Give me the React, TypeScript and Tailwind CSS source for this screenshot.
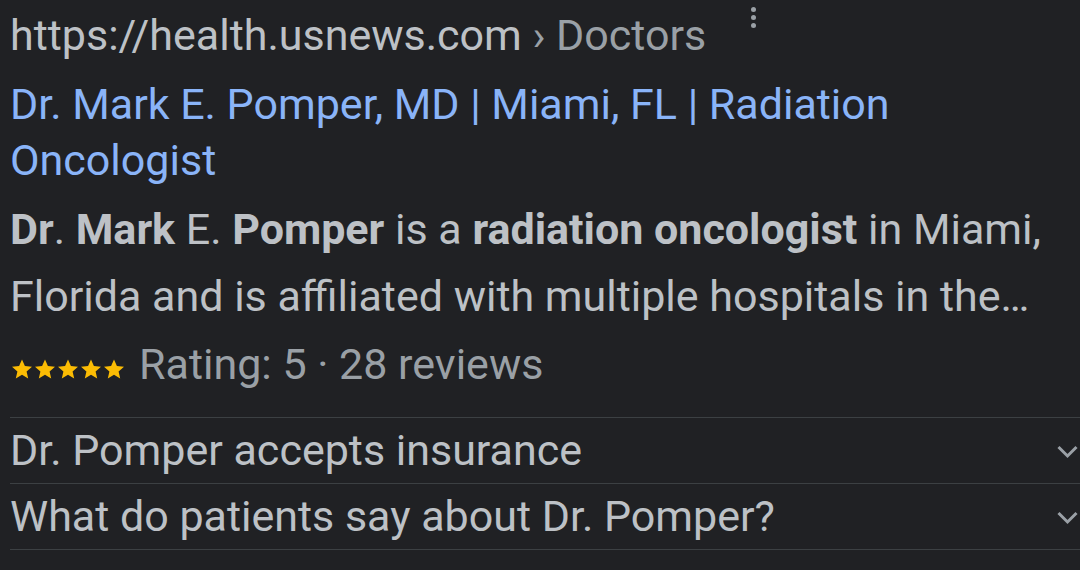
const Star = () => (
  <svg viewBox="0 0 24 24" className="w-[24px] h-[24px] -mr-[1px]" fill="#fbbc04">
    <path d="M12 2.5l2.9 6.6 7.1.6-5.4 4.7 1.6 7-6.2-3.7-6.2 3.7 1.6-7L2 9.7l7.1-.6z" />
  </svg>
)

const Chevron = () => (
  <svg viewBox="0 0 24 16" className="w-[24px] h-[16px] mt-[3px]" fill="none" stroke="#9aa0a6" strokeWidth={3}>
    <polyline points="2.5,3 11.5,12 20.5,3" />
  </svg>
)

export default function App() {
  return (
    <div className="w-[1080px] h-[570px] overflow-hidden bg-[#202124] pl-[10px] font-['Roboto',sans-serif]">
      {/* source line */}
      <div className="relative flex items-center h-[70px] pt-[1px] text-[43px]">
        <span className="text-[#bdc1c6]">https://health.usnews.com</span>
        <span className="text-[#9aa0a6]">&nbsp;› Doctors</span>
        <div className="absolute left-[741px] top-[7px] flex flex-col gap-[3px]">
          <span className="w-[5px] h-[5px] rounded-full bg-[#9aa0a6]" />
          <span className="w-[5px] h-[5px] rounded-full bg-[#9aa0a6]" />
          <span className="w-[5px] h-[5px] rounded-full bg-[#9aa0a6]" />
        </div>
      </div>

      {/* title */}
      <h3 className="mt-[6px] text-[43px] leading-[56px] text-[#8ab4f8] w-[920px]">
        Dr. Mark E. Pomper, MD | Miami, FL | Radiation Oncologist
      </h3>

      {/* snippet */}
      <p className="mt-[8px] text-[43px] leading-[67px] text-[#bdc1c6] w-[1070px] whitespace-nowrap">
        <b className="font-bold">Dr</b>. <b className="font-bold">Mark</b> E.{' '}
        <b className="font-bold">Pomper</b> is a <b className="font-bold">radiation oncologist</b> in Miami,
        <br />
        Florida and is affiliated with multiple hospitals in the…
      </p>

      {/* rating */}
      <div className="mt-[1px] flex items-center h-[67px]">
        <div className="flex items-center mr-[14px] mt-[8px]">
          <Star />
          <Star />
          <Star />
          <Star />
          <Star />
        </div>
        <span className="text-[43px] text-[#9aa0a6]">Rating: 5 · 28 reviews</span>
      </div>

      {/* accordion */}
      <div className="mt-[19px] border-t border-[#3c4043]">
        {['Dr. Pomper accepts insurance', 'What do patients say about Dr. Pomper?'].map((q) => (
          <div key={q} className="flex items-center justify-between h-[66px] border-b border-[#3c4043]">
            <span className="text-[43px] text-[#bdc1c6]">{q}</span>
            <Chevron />
          </div>
        ))}
      </div>
    </div>
  )
}
